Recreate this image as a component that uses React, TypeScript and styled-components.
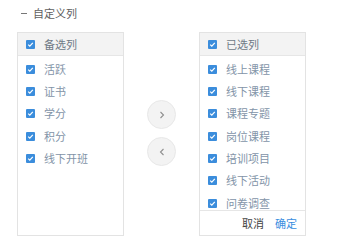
import styled, { createGlobalStyle } from "styled-components";

const GlobalStyle = createGlobalStyle`
  html, body {
    margin: 0;
    padding: 0;
    background: #ffffff;
  }
  body {
    font-family: "Noto Sans CJK SC", "Noto Sans", sans-serif;
  }
`;

const Wrapper = styled.div`
  width: 348px;
  height: 242px;
  padding: 5px 0 0 17px;
  box-sizing: border-box;
  overflow: hidden;
`;

const TitleRow = styled.div`
  display: flex;
  align-items: center;
  gap: 6px;
  height: 16px;
  padding-left: 4px;
  font-size: 11px;
  color: #5f5f5f;
`;

const Dash = styled.span`
  display: inline-block;
  width: 6px;
  height: 1px;
  background: #777;
`;

const Body = styled.div`
  display: flex;
  align-items: center;
  margin-top: 11px;
`;

const Panel = styled.div`
  width: 107px;
  height: 204px;
  box-sizing: border-box;
  border: 1px solid #e3e3e3;
  display: flex;
  flex-direction: column;
  background: #fff;
`;

const Header = styled.div`
  height: 22px;
  flex-shrink: 0;
  display: flex;
  align-items: center;
  gap: 9px;
  padding-left: 8px;
  background: #f3f3f3;
  border-bottom: 1px solid #e6e6e6;
  font-size: 11px;
  line-height: 1;
  color: #6f7a86;
`;

const List = styled.div`
  flex: 1;
  overflow: hidden;
  padding-top: 2px;
`;

const Row = styled.div`
  height: 22.33px;
  display: flex;
  align-items: center;
  gap: 9px;
  padding-left: 8px;
  font-size: 11px;
  line-height: 1;
  color: #8394a8;
`;

const Footer = styled.div`
  height: 24px;
  flex-shrink: 0;
  display: flex;
  align-items: center;
  justify-content: flex-end;
  gap: 11px;
  padding-right: 8px;
  border-top: 1px solid #e6e6e6;
  font-size: 11px;
  line-height: 1;
`;

const FooterButton = styled.span<{ $primary?: boolean }>`
  color: ${(p) => (p.$primary ? "#3a8ee0" : "#444")};
`;

const Middle = styled.div`
  width: 75px;
  display: flex;
  flex-direction: column;
  align-items: center;
  gap: 8px;
  padding-bottom: 2px;
`;

const RoundButton = styled.div`
  width: 29px;
  height: 29px;
  border-radius: 50%;
  box-sizing: border-box;
  border: 1px solid #e8e8e8;
  background: #f3f3f3;
  display: flex;
  align-items: center;
  justify-content: center;
`;

const Box = styled.span`
  width: 9px;
  height: 9px;
  border-radius: 1px;
  background: #3b8ddc;
  display: inline-flex;
  align-items: center;
  justify-content: center;
  flex-shrink: 0;
`;

function Check() {
  return (
    <Box>
      <svg width="7" height="7" viewBox="0 0 7 7">
        <path d="M1.2 3.6 L2.8 5.1 L5.8 1.9" fill="none" stroke="#fff" strokeWidth="1.2" />
      </svg>
    </Box>
  );
}

function Arrow({ dir }: { dir: "left" | "right" }) {
  return (
    <svg width="6" height="8" viewBox="0 0 6 8">
      <path
        d={dir === "right" ? "M1.5 1 L4.5 4 L1.5 7" : "M4.5 1 L1.5 4 L4.5 7"}
        fill="none"
        stroke="#8f8f8f"
        strokeWidth="1.1"
      />
    </svg>
  );
}

const available = ["活跃", "证书", "学分", "积分", "线下开班"];
const selected = ["线上课程", "线下课程", "课程专题", "岗位课程", "培训项目", "线下活动", "问卷调查"];

export default function App() {
  return (
    <>
      <GlobalStyle />
      <Wrapper>
        <TitleRow>
          <Dash />
          自定义列
        </TitleRow>
        <Body>
          <Panel>
            <Header>
              <Check />
              备选列
            </Header>
            <List>
              {available.map((item) => (
                <Row key={item}>
                  <Check />
                  {item}
                </Row>
              ))}
            </List>
          </Panel>
          <Middle>
            <RoundButton>
              <Arrow dir="right" />
            </RoundButton>
            <RoundButton>
              <Arrow dir="left" />
            </RoundButton>
          </Middle>
          <Panel>
            <Header>
              <Check />
              已选列
            </Header>
            <List>
              {selected.map((item) => (
                <Row key={item}>
                  <Check />
                  {item}
                </Row>
              ))}
            </List>
            <Footer>
              <FooterButton>取消</FooterButton>
              <FooterButton $primary>确定</FooterButton>
            </Footer>
          </Panel>
        </Body>
      </Wrapper>
    </>
  );
}
